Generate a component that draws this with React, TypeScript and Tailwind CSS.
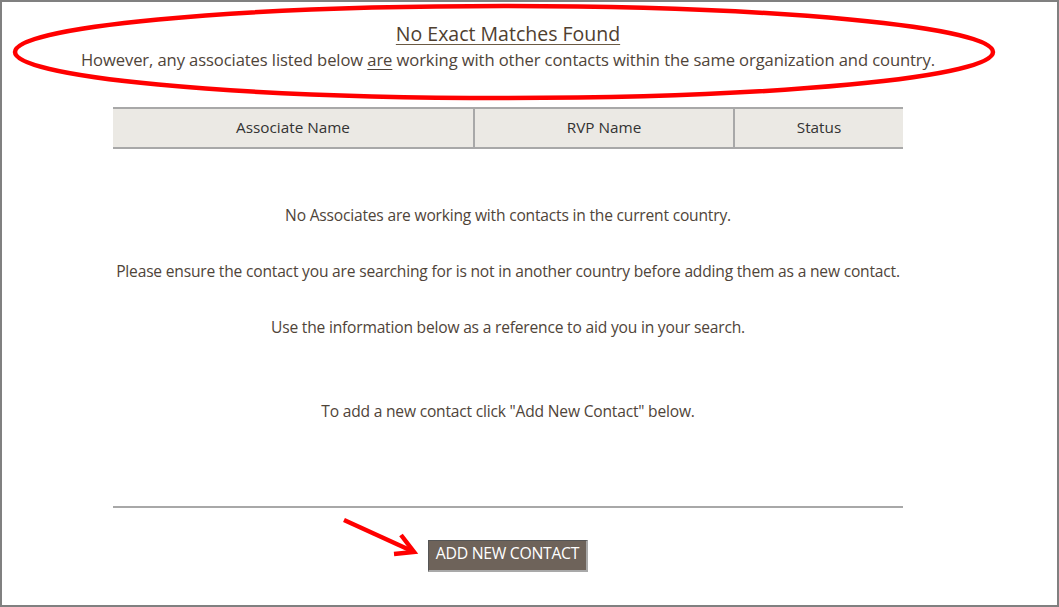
import React from 'react';

const font = { fontFamily: '"Open Sans", "Noto Sans", sans-serif' };

const App: React.FC = () => {
  return (
    <div className="w-[1059px] h-[607px] bg-white border-2 border-[#808080] relative overflow-hidden text-[#4f4439]" style={font}>
      <div className="w-[1012px] flex flex-col items-center">
        <h1 className="mt-[19px] text-[19.5px] leading-[26px] underline underline-offset-[3px] decoration-[#6b5a44] text-[#4f4030]">
          No Exact Matches Found
        </h1>
        <p className="mt-[2px] text-[16.6px] leading-[22px] tracking-[-0.1px] whitespace-nowrap">
          However, any associates listed below <span className="underline underline-offset-[3px]">are</span> working with other contacts within the same organization and country.
        </p>

        <table className="mt-[36px] w-[790px] border-collapse text-[15.3px] text-[#333]">
          <thead>
            <tr className="bg-[#ebe9e4] h-[40px]">
              <th className="font-normal pb-[2px] border-y-2 border-r-2 border-[#a8a8a8] w-[361px]">Associate Name</th>
              <th className="font-normal pb-[2px] border-y-2 border-r-2 border-[#a8a8a8] w-[260px]">RVP Name</th>
              <th className="font-normal pb-[2px] border-y-2 border-[#a8a8a8]">Status</th>
            </tr>
          </thead>
        </table>

        <div className="w-[790px] flex flex-col items-center text-[15.6px] leading-[20px] tracking-[-0.2px]">
          <p className="mt-[56px] whitespace-nowrap">No Associates are working with contacts in the current country.</p>
          <p className="mt-[36px] whitespace-nowrap">Please ensure the contact you are searching for is not in another country before adding them as a new contact.</p>
          <p className="mt-[36px] whitespace-nowrap">Use the information below as a reference to aid you in your search.</p>
          <p className="mt-[64px] whitespace-nowrap">To add a new contact click "Add New Contact" below.</p>
          <div className="mt-[85px] w-full h-[2px] bg-[#a8a8a8]" />
          <button className="mt-[32px] h-[32px] px-[7px] pb-[5px] bg-[#6e635a] text-white text-[15.8px] tracking-[-0.3px] border-t border-l border-[#555] border-r-2 border-b-2 border-r-[#a9a9a9] border-b-[#a9a9a9]">
            ADD NEW CONTACT
          </button>
        </div>
      </div>

      <svg className="absolute left-0 top-0 pointer-events-none" width="1059" height="607">
        <ellipse cx="502" cy="50" rx="489" ry="46" fill="none" stroke="#ff0000" strokeWidth="4.5" />
        <line x1="342" y1="518" x2="410" y2="549" stroke="#ff0000" strokeWidth="4.5" />
        <polyline points="399,533 412,550 392,552" fill="none" stroke="#ff0000" strokeWidth="4.5" strokeLinejoin="miter" />
      </svg>
    </div>
  );
};

export default App;
